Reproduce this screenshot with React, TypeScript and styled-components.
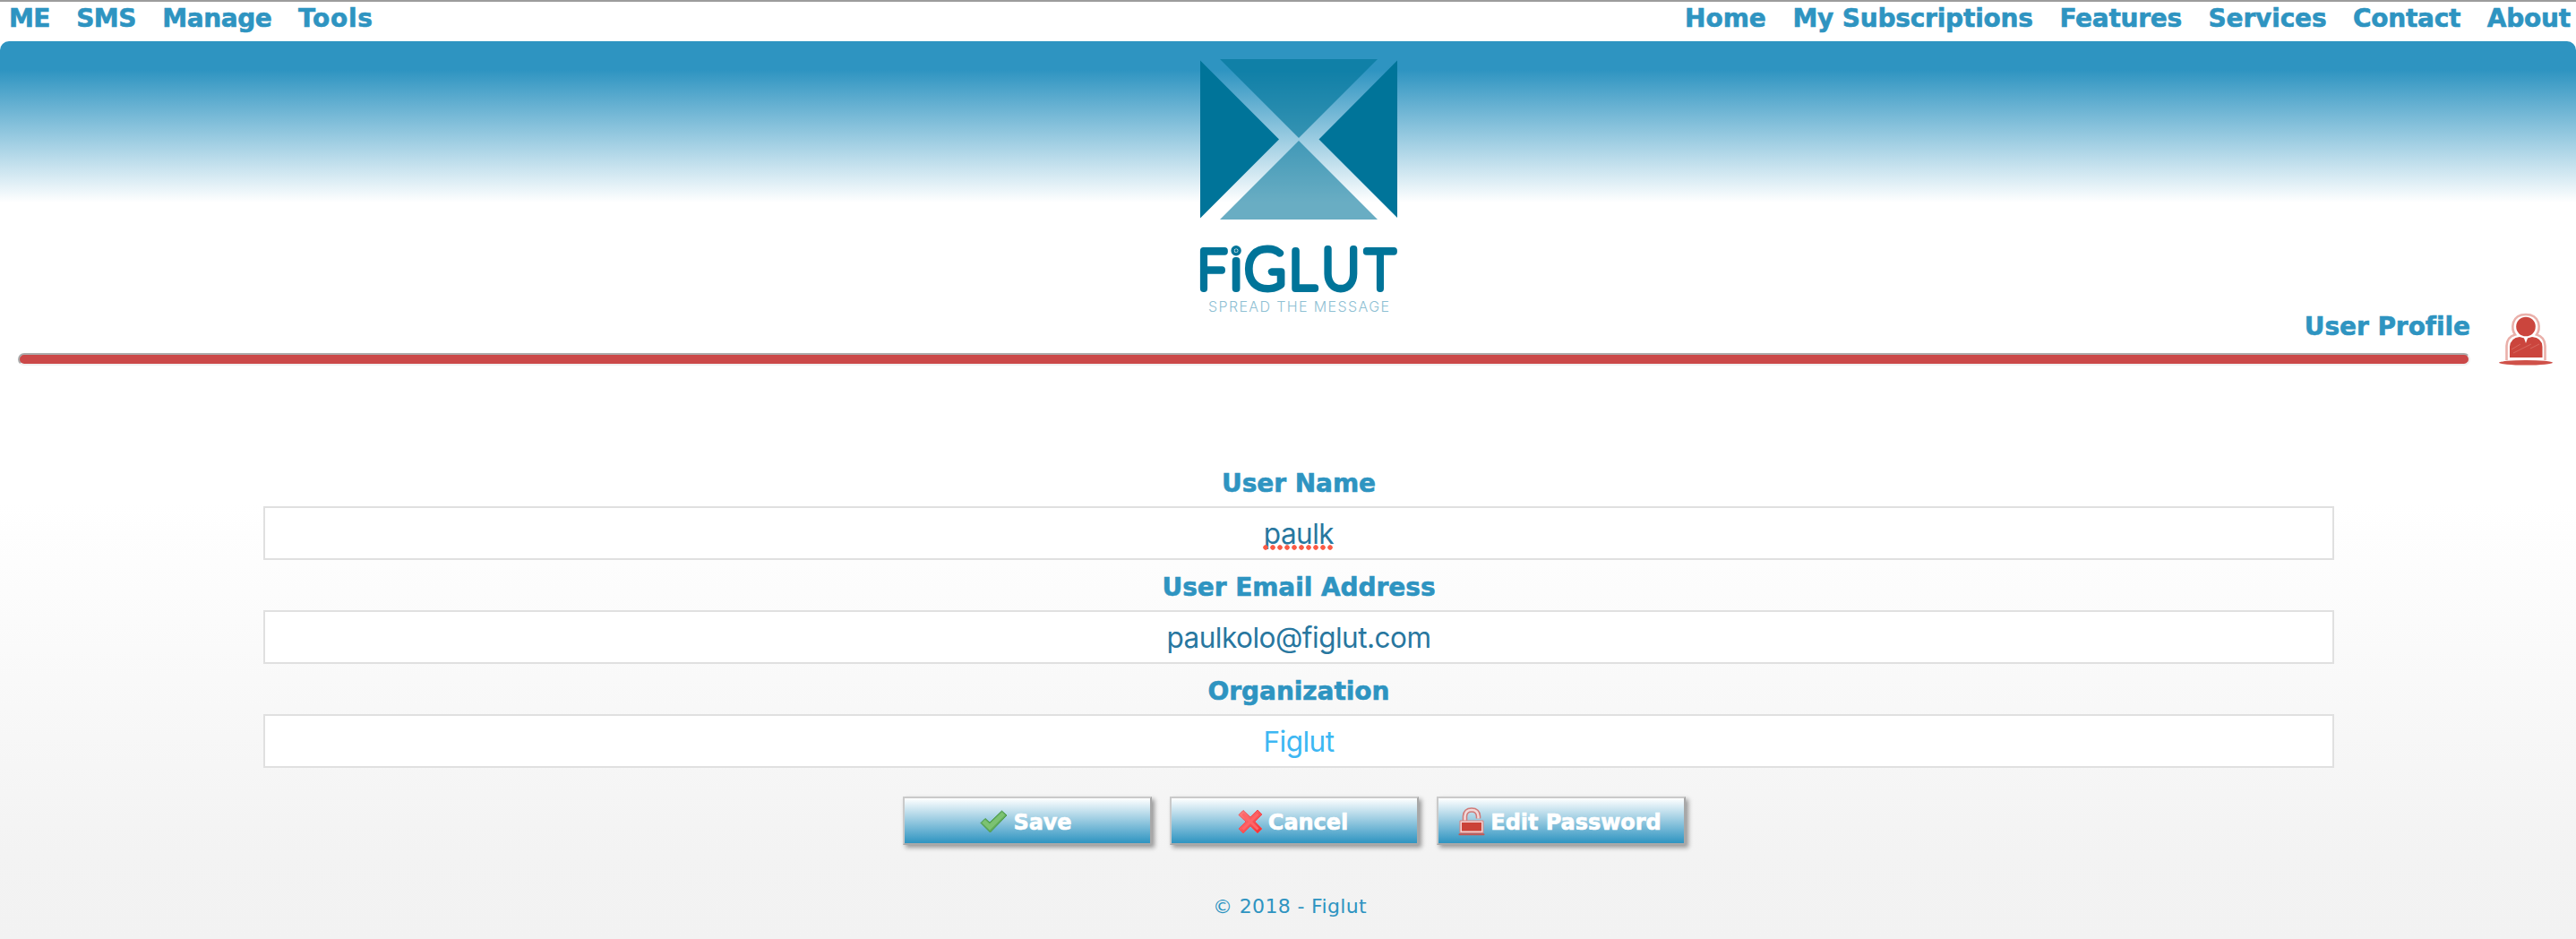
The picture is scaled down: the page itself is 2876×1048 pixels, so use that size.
import React from "react";
import styled, { createGlobalStyle } from "styled-components";

const BLUE = "#2e94c1";

const GlobalStyle = createGlobalStyle`
  * { box-sizing: border-box; }
  body {
    margin: 0;
    background: #f2f2f2;
    font-family: Verdana, "DejaVu Sans", sans-serif;
    color: ${BLUE};
  }
`;

const Page = styled.div`
  width: 100%;
  height: 1048px;
  display: flex;
  flex-direction: column;
  border-top: 2px solid #9c9c9c;
  background: linear-gradient(#ffffff 560px, #f3f3f3 950px, #f2f2f2);
  overflow: hidden;
`;

const NavBar = styled.nav`
  height: 44px;
  flex: none;
  display: flex;
  justify-content: space-between;
  padding: 0 6px 0 10px;
  background: #fff;
`;

const NavGroup = styled.div`
  display: flex;
  gap: 29.6px;
`;

const NavLink = styled.a<{ $spacing: number }>`
  font-weight: bold;
  font-size: 28px;
  line-height: 37px;
  letter-spacing: ${(p) => p.$spacing}px;
  -webkit-text-stroke: 0.6px ${BLUE};
  white-space: nowrap;
`;

const Header = styled.header`
  height: 302px;
  flex: none;
  display: flex;
  justify-content: center;
  padding: 20px 0 0 24px;
  border-radius: 10px 10px 0 0;
  background: linear-gradient(${BLUE} 32px, #ffffff 180px);
`;

const TitleRow = styled.section`
  height: 161px;
  flex: none;
  display: flex;
  justify-content: space-between;
  padding: 0 23px 0 20px;
`;

const TitleColumn = styled.div`
  width: 2738px;
  flex: none;
  display: flex;
  flex-direction: column;
`;

const Title = styled.h1`
  margin: 0;
  height: 46px;
  font-size: 28px;
  line-height: 33px;
  text-align: right;
  letter-spacing: -0.05px;
  -webkit-text-stroke: 0.6px ${BLUE};
`;

const Rule = styled.hr`
  width: 100%;
  height: 14px;
  margin: 0;
  border: 2px solid;
  border-color: #acacac #f0f0f0 #f0f0f0 #acacac;
  border-radius: 7px;
  background: #cb4848;
`;

const Form = styled.form`
  flex: none;
  display: flex;
  flex-direction: column;
  padding: 0 270px 0 294px;
`;

const Label = styled.label`
  height: 56px;
  padding-top: 5px;
  text-align: center;
  font-weight: bold;
  font-size: 28px;
  line-height: 51px;
  letter-spacing: -0.05px;
  -webkit-text-stroke: 0.6px ${BLUE};
`;

const Field = styled.div<{ $color?: string }>`
  height: 60px;
  border: 2px solid #e0e0e0;
  background: #fff;
  padding-top: 1px;
  text-align: center;
  font-family: Inter, sans-serif;
  font-size: 31.5px;
  line-height: 56px;
  letter-spacing: -0.5px;
  color: ${(p) => p.$color ?? "#28779f"};
`;

const Misspelled = styled.span`
  position: relative;
  &::after {
    content: "";
    position: absolute;
    left: -1px;
    bottom: 1px;
    width: 80px;
    height: 6px;
    background: radial-gradient(circle at 3px 3px, #fb5a45 2.4px, transparent 3.1px) 0 0 / 8px 6px repeat-x;
  }
`;

const Actions = styled.div`
  display: flex;
  justify-content: center;
  gap: 20px;
  padding: 32px 0 0 14px;
`;

const Button = styled.button`
  width: 278px;
  height: 54px;
  display: flex;
  align-items: center;
  justify-content: center;
  padding: 4px 3px 0 0;
  border: 2px solid;
  border-color: #cacaca #a8a8a8 #a8a8a8 #cacaca;
  border-radius: 0;
  background: linear-gradient(#ffffff, ${BLUE});
  box-shadow: 3px 3px 5px rgba(0, 0, 0, 0.38);
  color: #fff;
  font-family: inherit;
  font-size: 24px;
  font-weight: bold;
  line-height: 46px;
  letter-spacing: -0.05px;
  -webkit-text-stroke: 0.6px #fff;
  svg { flex: none; margin: 0 6px 3px 0; }
`;

const Footer = styled.footer`
  padding: 53px 0 0 4px;
  text-align: center;
  font-size: 22px;
  line-height: 32px;
  letter-spacing: 0.35px;
`;

const wordmark = [
  { char: "F", x: -2.9, scale: 0.94 },
  { char: "i", x: 33.8, scale: 1 },
  { char: "G", x: 49.8, scale: 1 },
  { char: "L", x: 99.3, scale: 0.98 },
  { char: "U", x: 136, scale: 0.95 },
  { char: "T", x: 184.7, scale: 0.93 },
];

const Logo = () => (
  <svg width="232" height="292" viewBox="-6 0 232 292">
    <g fill="#007499">
      <path d="M0 1.5 88 89.5 0 177.5Z" />
      <path d="M220 1.5 132.5 89.5 220 177Z" />
      <path d="M22 0H198L110 88Z" opacity=".65" />
      <path d="M110 91 198 179H22Z" opacity=".59" />
      {wordmark.map(({ char, x, scale }) => (
        <text
          key={char}
          transform={`translate(${x} 256.2) scale(${scale} 1)`}
          fontFamily="Lato, sans-serif" fontWeight="100" fontSize="61"
          stroke="#007499" strokeWidth="8" strokeLinejoin="round" strokeLinecap="round"
        >{char}</text>
      ))}
    </g>
    <text x="9" y="281.5" fill="#8ec0d3" fontFamily="Inter, sans-serif" fontWeight="300" fontSize="16" textLength="202">SPREAD THE MESSAGE</text>
  </svg>
);

const UserIcon = () => (
  <svg width="64" height="64" viewBox="0 -1 64 64">
    <defs>
      <filter id="chalk"><feGaussianBlur stdDeviation=".5" /></filter>
    </defs>
    <g filter="url(#chalk)">
      <path d="M9.5 53V37Q10 27 19 24.5Q15 19 17 11Q20 2 31 2Q42 2 45 11Q47 19 43 24.5Q52 27 52.5 37V53" fill="#fff" stroke="#eab0aa" strokeWidth="2.6" />
      <circle cx="31" cy="15.5" r="10.8" fill="#cb453c" />
      <path d="M13 50V38Q14 28 24 27L31 29 38 27Q49 28 49.5 38V50Z" fill="#cb453c" />
      <path d="M28.5 27H33.5L31 34Z" fill="#fff" />
      <path d="M15 41 25 35M17 45 37 35M36 40 46 35" stroke="#d8685f" strokeWidth="1" />
      <ellipse cx="31" cy="55.8" rx="30" ry="2.8" fill="#cf5149" />
    </g>
  </svg>
);

const CheckIcon = () => (
  <svg width="31" height="26" viewBox="0 0 31 26">
    <path d="M1 14.5 6 9.5 11 14 24.5 1 30 6 11.5 25Z" fill="#5fac57" stroke="#4f9a4e" strokeWidth="1" strokeLinejoin="round" />
    <path d="M4 12.5 11 19 26.5 4" fill="none" stroke="#7cc272" strokeWidth="5" />
  </svg>
);

const CrossIcon = () => (
  <svg width="28" height="28" viewBox="0 0 28 28">
    <defs>
      <linearGradient id="cross" x1="0" y1="0" x2="1" y2="1">
        <stop offset="0" stopColor="#ff8585" /><stop offset="1" stopColor="#f02a30" />
      </linearGradient>
    </defs>
    <path d="M6 1.5 14 9 22 1 27 6 19 14 27 22 22 27 14 19 6 27 1 22 9 14 1 6.5Z" fill="url(#cross)" stroke="#ee5459" strokeWidth="1" strokeLinejoin="round" />
    <path d="M5.5 5.5 22.5 22.5M22.5 5.5 5.5 22.5" stroke="#ff6568" strokeWidth="3" />
  </svg>
);

const LockIcon = () => (
  <svg width="30" height="32" viewBox="0 0 30 32">
    <path d="M7.5 15V10Q8 3 15 3Q22 3 22.5 10V12.5" fill="none" stroke="#d07a78" strokeWidth="5.6" />
    <path d="M7.5 15V10Q8 3 15 3Q22 3 22.5 10V12.5" fill="none" stroke="#f2d9da" strokeWidth="2.6" />
    <path d="M2 15H28V28.5H2Z" fill="#f2d3d3" stroke="#d8827f" strokeWidth="1" />
    <path d="M4 17H26V26.5H4Z" fill="#cb4238" />
    <path d="M1.5 30.3H28.5" stroke="#c95550" strokeWidth="2" strokeLinecap="round" />
  </svg>
);

const leftLinks = [
  { text: "ME", spacing: -0.65 },
  { text: "SMS", spacing: -0.6 },
  { text: "Manage", spacing: -0.43 },
  { text: "Tools", spacing: 0.7 },
];

const rightLinks = [
  { text: "Home", spacing: 0 },
  { text: "My Subscriptions", spacing: -0.2 },
  { text: "Features", spacing: -0.26 },
  { text: "Services", spacing: -0.15 },
  { text: "Contact", spacing: -0.27 },
  { text: "About", spacing: -0.2 },
];

export default function App() {
  return (
    <Page>
      <GlobalStyle />
      <NavBar>
        <NavGroup>
          {leftLinks.map((l) => <NavLink key={l.text} $spacing={l.spacing}>{l.text}</NavLink>)}
        </NavGroup>
        <NavGroup>
          {rightLinks.map((l) => <NavLink key={l.text} $spacing={l.spacing}>{l.text}</NavLink>)}
        </NavGroup>
      </NavBar>
      <Header><Logo /></Header>
      <TitleRow>
        <TitleColumn>
          <Title>User Profile</Title>
          <Rule />
        </TitleColumn>
        <UserIcon />
      </TitleRow>
      <Form>
        <Label>User Name</Label>
        <Field><Misspelled>paulk</Misspelled></Field>
        <Label>User Email Address</Label>
        <Field>paulkolo@figlut.com</Field>
        <Label>Organization</Label>
        <Field $color="#3db7f3">Figlut</Field>
      </Form>
      <Actions>
        <Button type="button"><CheckIcon />Save</Button>
        <Button type="button"><CrossIcon />Cancel</Button>
        <Button type="button"><LockIcon />Edit Password</Button>
      </Actions>
      <Footer>© 2018 - Figlut</Footer>
    </Page>
  );
}
